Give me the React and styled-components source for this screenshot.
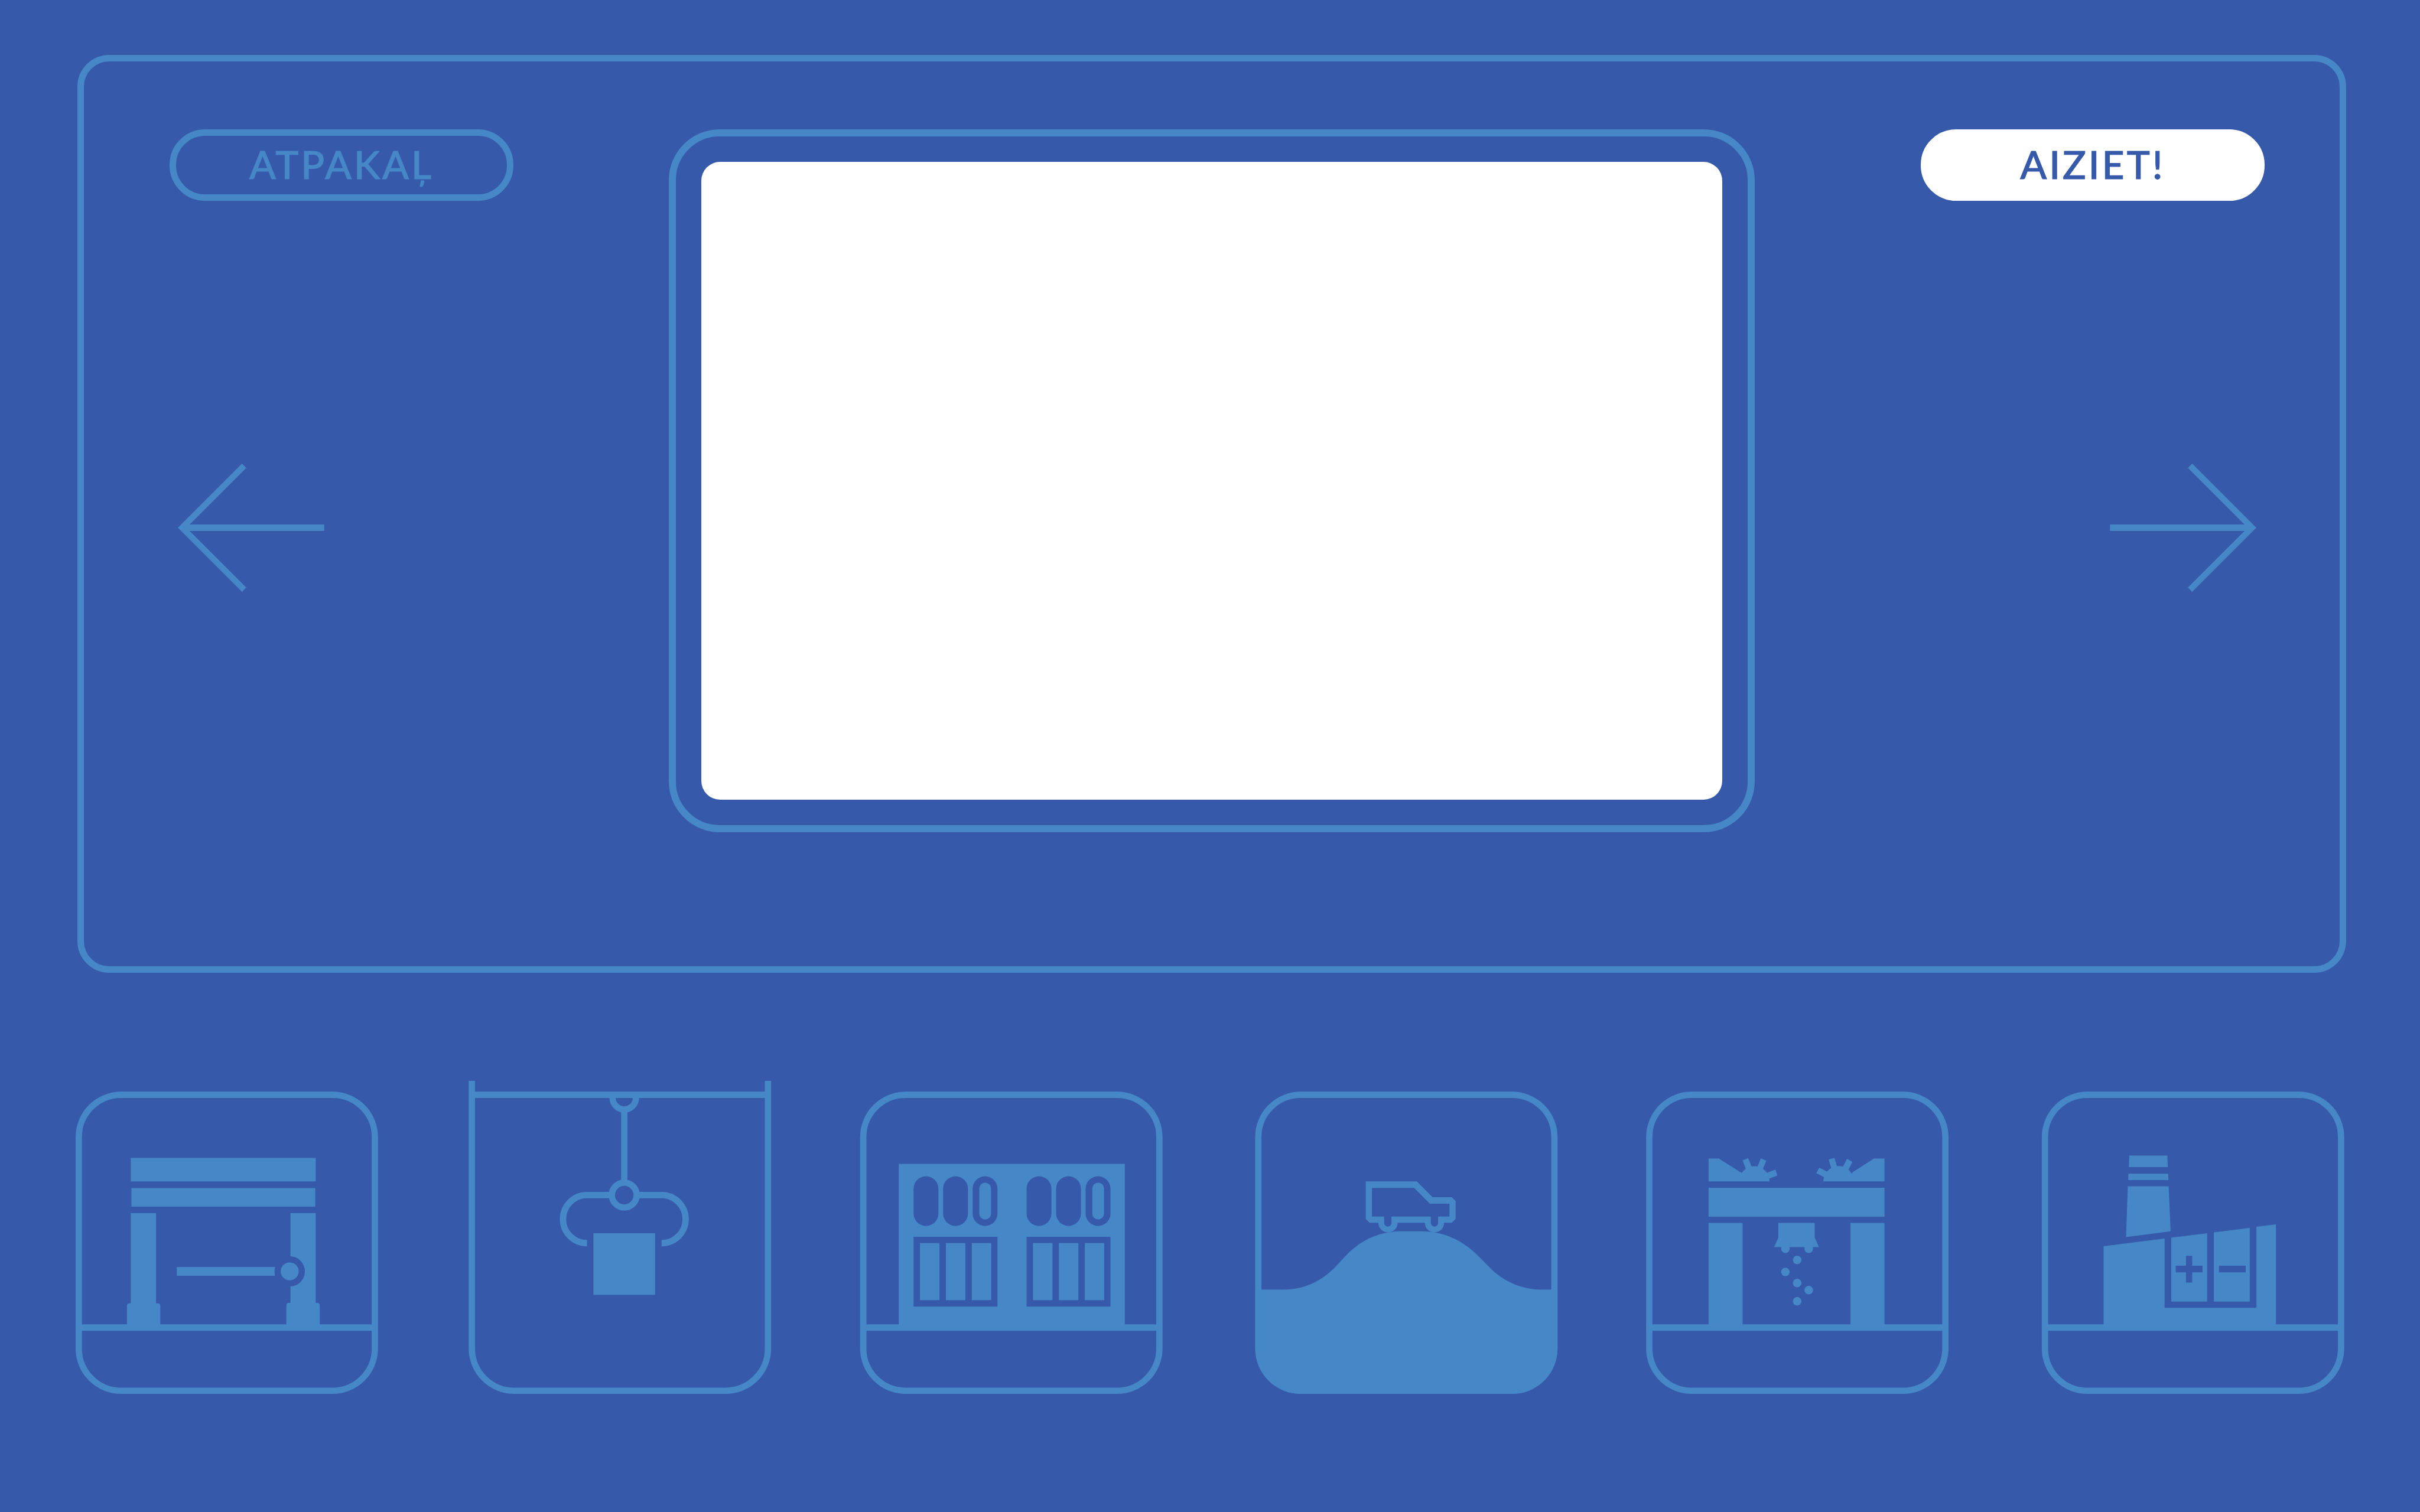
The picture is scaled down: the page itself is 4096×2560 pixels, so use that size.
import React from "react";
import styled, { createGlobalStyle } from "styled-components";

const BG = "#3659AA";
const LINE = "#4687C8";

const GlobalStyle = createGlobalStyle`
  *, *::before, *::after { box-sizing: border-box; }
  body { margin: 0; background: ${BG}; }
`;

const Page = styled.main`
  display: flex;
  flex-direction: column;
  gap: 166px;
  min-height: 100vh;
  padding: 93px 0 180px;
  background: ${BG};
  font-family: Lato, "Open Sans", sans-serif;
`;

const Panel = styled.section`
  display: grid;
  grid-template-columns: 990fr 1838fr 990fr;
  align-items: start;
  margin: 0 125px 0 131px;
  padding: 115px 0 227px;
  border: 11px solid ${LINE};
  border-radius: 54px;
`;

const Side = styled.div`
  display: flex;
  flex-direction: column;
  gap: 431px;
  align-items: ${(p) => (p.$end ? "flex-end" : "flex-start")};
  padding: ${(p) => (p.$end ? "0 127px 0 0" : "0 0 0 145px")};
`;

const PillButton = styled.button`
  width: 582px;
  height: 121px;
  padding: 0 0 4px;
  border: 11px solid ${(p) => (p.$filled ? "#fff" : LINE)};
  border-radius: 60px;
  background: ${(p) => (p.$filled ? "#fff" : "transparent")};
  color: ${(p) => (p.$filled ? BG : LINE)};
  font-family: inherit;
  font-size: 66px;
  font-weight: 500;
  line-height: 80px;
  letter-spacing: 4px;
  -webkit-text-stroke: 1px currentColor;
  cursor: pointer;
`;

const ArrowButton = styled.button`
  display: block;
  padding: 14px;
  border: 0;
  background: none;
  color: ${LINE};
  cursor: pointer;
`;

const ArrowDrawing = styled.svg`
  display: block;
  width: 248px;
  height: 217px;
`;

const ScreenFrame = styled.div`
  padding: 43px;
  border: 12px solid ${LINE};
  border-radius: 86px;
`;

const Screen = styled.div`
  aspect-ratio: 8 / 5;
  border-radius: 32px;
  background: #fff;
`;

const Shelf = styled.nav`
  display: grid;
  grid-template-columns: repeat(6, 1fr);
  gap: 97px;
  padding: 0 103px 0 100px;
`;

const TileButton = styled.button`
  display: block;
  padding: 0;
  border: 0;
  background: none;
  cursor: pointer;
`;

const TileDrawing = styled.svg`
  display: block;
  width: 100%;
  aspect-ratio: 1;
  fill: ${LINE};
  overflow: visible;

  .line { fill: none; stroke: ${LINE}; stroke-width: 29.5; }
  .hole { fill: ${BG}; }
`;

function Arrow({ flip }) {
  return (
    <ArrowDrawing viewBox="0 0 968 847" aria-hidden="true">
      <g transform={flip ? "translate(968 0) scale(-1 1)" : undefined} fill="none" stroke="currentColor">
        <path d="M438 14 L28 423.5 L438 833" strokeWidth="40" />
        <path d="M40 423.5 H967" strokeWidth="42" />
      </g>
    </ArrowDrawing>
  );
}

function Frame({ x = 92 }) {
  return <rect className="line" x={x} y="112" width="1383.5" height="1383.5" rx="198" />;
}

function Ground({ x = 92 }) {
  return <rect x={x} y="1185" width="1383" height="30" />;
}

function Gate() {
  return (
    <>
      <Frame />
      <Ground />
      <rect x="335" y="407" width="864" height="110" />
      <rect x="338" y="548" width="859" height="87" />
      <rect x="335" y="665" width="118" height="530" />
      <rect x="1081" y="665" width="118" height="530" />
      <path d="M317 1200 V1099 Q317 1087 329 1087 H461 Q473 1087 473 1099 V1200Z" />
      <path d="M1062 1200 V1097 Q1062 1085 1074 1085 H1206 Q1218 1085 1218 1097 V1200Z" />
      <rect x="550" y="917" width="459" height="41" />
      <circle className="hole" cx="1077.5" cy="937.5" r="71" />
      <circle cx="1077.5" cy="937.5" r="42" />
    </>
  );
}

function Crane() {
  return (
    <>
      <path className="line" d="M85 47 V1297.5 A198 198 0 0 0 283 1495.5 H1270.5 A198 198 0 0 0 1468.5 1297.5 V47 M85 112 H1468" />
      <path className="line" d="M742.5 126 A54.5 54.5 0 0 0 851.5 126" />
      <path className="line" d="M797 190 V515" />
      <circle className="line" cx="797" cy="581" r="58" />
      <path className="line" d="M730 581 H623 A112.25 112.25 0 0 0 623 805.5" />
      <path className="line" d="M864 581 H971.5 A112.25 112.25 0 0 1 971.5 805.5" />
      <rect x="653" y="759" width="288" height="288" />
    </>
  );
}

function Store() {
  return (
    <>
      <Frame x={91} />
      <Ground x={91} />
      <rect x="257" y="435" width="1056" height="760" />
      {[326, 854].map((x) => (
        <g key={x}>
          {[0, 138, 276].map((dx) => (
            <rect key={dx} className="hole" x={x + dx} y="493" width="116" height="232" rx="58" />
          ))}
          <rect x={x + 307} y="523" width="55" height="172" rx="27.5" />
          <rect className="hole" x={x} y="776" width="392" height="326" />
          {[30, 151, 272].map((dx) => (
            <rect key={dx} x={x + dx} y="805" width="91" height="267" />
          ))}
        </g>
      ))}
    </>
  );
}

function Hill() {
  return (
    <>
      <Frame />
      <path d="M78 1023 H208 C300 1023 381 988 446 923 L507 858 C580 784 666 750 760 750 H850 C950 750 1035 784 1110 856 L1178 924 C1240 986 1325 1023 1415 1023 H1490 V1297.5 A212.5 212.5 0 0 1 1277.5 1510 H290.5 A212.5 212.5 0 0 1 78 1297.5Z" />
      <path
        fillRule="evenodd"
        d="M594 517 H833 L906 591 H996 L1014 609 V692 L996 710 H960 A45 45 0 0 1 870 710 H743 A45 45 0 0 1 653 710 H612 L594 692Z M623 547 V681 H680 V711 A17 17 0 0 0 714 711 V681 H898 V711 A17 17 0 0 0 932 711 V681 H985 V621 H893 L820 547Z"
      />
    </>
  );
}

function Crusher() {
  const grains = [[732, 832], [841, 832], [787, 884], [732, 940], [787, 992], [841, 1025], [787, 1077]];
  return (
    <>
      <Frame x={96} />
      <Ground x={96} />
      <path d="M373 410 H421 L519 472 L529 476 Q536 465 547 458 L532 419 L558 408 L574 447 Q588 444 602 447 L617 409 L643 420 L627 458 Q638 465 646 477 L685 462 L695 489 L657 504 V517 H373Z" />
      <path d="M1195 410 H1146 L1048 473 L1041 480 Q1035 470 1027 462 L1045 426 L1020 411 L1001 448 Q988 444 973 446 L961 407 L934 415 L946 455 Q935 461 926 471 L890 453 L876 478 L912 497 L909 517 H1195Z" />
      <rect x="373" y="547" width="822" height="135" />
      <rect x="373" y="711" width="159" height="480" />
      <rect x="1036" y="711" width="159" height="480" />
      <path d="M699 711 H869 V780 L889 824 H679 L699 780Z" />
      {grains.map(([cx, cy]) => (
        <circle key={`${cx}-${cy}`} cx={cx} cy={cy} r="20" />
      ))}
    </>
  );
}

function PowerPlant() {
  return (
    <>
      <Frame x={100} />
      <Ground x={100} />
      <path d="M494 396 H672 L674 450 H492Z" />
      <path d="M490 481 H676 L677 511 H489Z" />
      <path d="M487 540 H678 L687 750 L479 777Z" />
      <path d="M374 820 L659 784 V1108 H1088 V729 L1179 718 V1195 H374Z" />
      <path d="M690 780 L858 759 V1079 H690Z" />
      <path d="M889 755 L1057 734 V1079 H889Z" />
      <path className="hole" d="M759 865 H788 V911 H836 V942 H788 V990 H759 V942 H711 V911 H759Z" />
      <rect className="hole" x="913" y="911" width="125" height="31" />
    </>
  );
}

const tiles = [
  { label: "Vārti", Drawing: Gate, x: 0 },
  { label: "Celtnis", Drawing: Crane, x: -8 },
  { label: "Noliktava", Drawing: Store, x: 5 },
  { label: "Kalns", Drawing: Hill, x: -4 },
  { label: "Drupinātājs", Drawing: Crusher, x: 9 },
  { label: "Elektrostacija", Drawing: PowerPlant, x: 0 },
];

export default function App() {
  return (
    <>
      <GlobalStyle />
      <Page>
        <Panel>
          <Side>
            <PillButton type="button">ATPAKAĻ</PillButton>
            <ArrowButton type="button" aria-label="Iepriekšējais">
              <Arrow />
            </ArrowButton>
          </Side>
          <ScreenFrame>
            <Screen />
          </ScreenFrame>
          <Side $end>
            <PillButton type="button" $filled>AIZIET!</PillButton>
            <ArrowButton type="button" aria-label="Nākamais">
              <Arrow flip />
            </ArrowButton>
          </Side>
        </Panel>
        <Shelf>
          {tiles.map(({ label, Drawing, x }) => (
            <TileButton key={label} type="button" aria-label={label}>
              <TileDrawing viewBox={`${x} 0 1568 1568`} aria-hidden="true">
                <Drawing />
              </TileDrawing>
            </TileButton>
          ))}
        </Shelf>
      </Page>
    </>
  );
}
